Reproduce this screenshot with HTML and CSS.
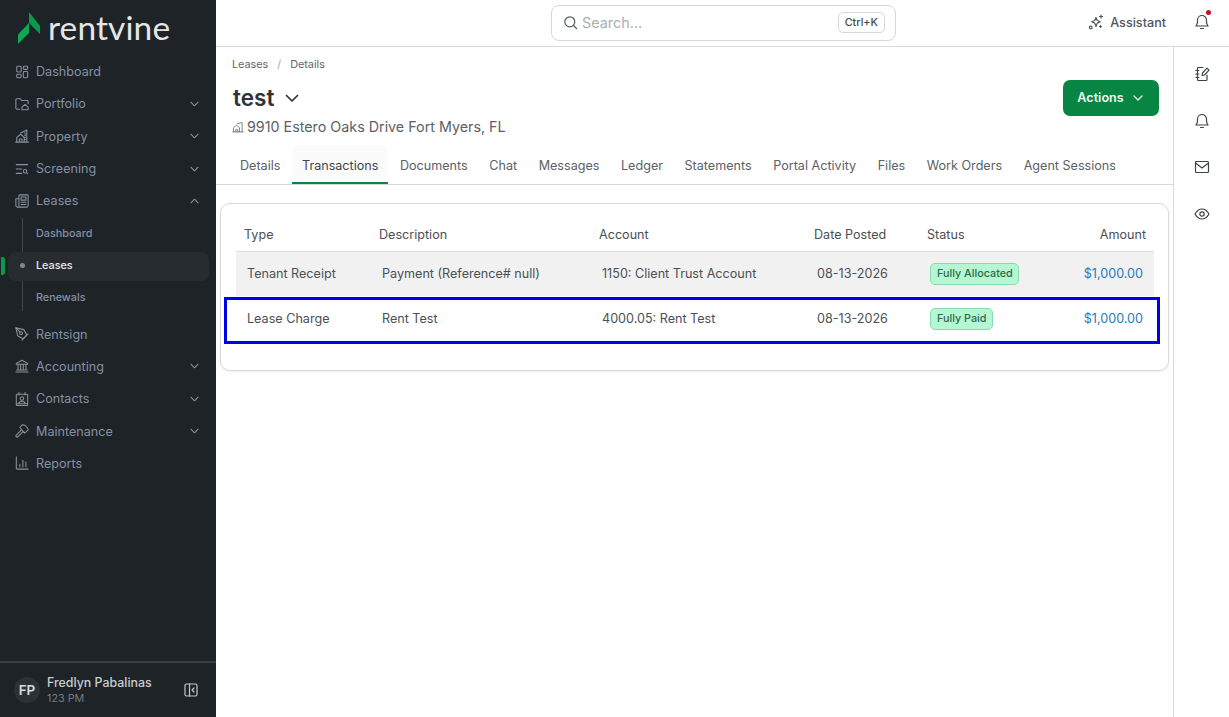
FILE: index.html
```html
<!DOCTYPE html>
<html lang="en">
<head>
    <meta charset="UTF-8">
    <meta name="viewport" content="width=device-width, initial-scale=1.0">
    <title>Lease Details - Rentvine</title>
    <link rel="stylesheet" href="styles.css">
</head>
<body>
    <div class="app">
        <aside class="sidebar">
            <div class="logo">
                <svg class="logo-mark" width="22" height="32" viewBox="0 0 22 32"><path d="M0 22.500L11 11V21L0 32Z" fill="#0fa956"/><path d="M11 0L22 14V22L11 11Z" fill="#0b9a4c"/></svg>
                <span class="logo-text">rentvine</span>
            </div>
            <nav class="nav">
                <a class="nav-item"><svg class="nav-icon" viewBox="0 0 16 16"><rect x="2" y="1.500" width="5" height="6.500" rx="1"/><rect x="9.500" y="1.500" width="5" height="3.500" rx="1"/><rect x="2" y="10.500" width="5" height="4" rx="1"/><rect x="9.500" y="7.500" width="5" height="7" rx="1"/></svg>Dashboard</a>
                <a class="nav-item"><svg class="nav-icon" viewBox="0 0 16 16"><path d="M5.500 14H2.500A1.500 1.500 0 0 1 1 12.500V3a1 1 0 0 1 1-1h4l1.500 2H14a1 1 0 0 1 1 1v2.500"/><path d="M8 11.500l3.500-3 3.500 3V14.500H8z"/></svg>Portfolio<svg class="chev" viewBox="0 0 10 6"><path d="M1 1l4 4 4-4"/></svg></a>
                <a class="nav-item"><svg class="nav-icon" viewBox="0 0 16 16"><path d="M.8 15h14.400M2 15V9.500L6.500 6l4 3.500V15M5 15v-3.500h3V15M6.500 4.500L13.500 1.200V15M11 4.500h1M11 7h1M11 9.500h1M11 12h1"/></svg>Property<svg class="chev" viewBox="0 0 10 6"><path d="M1 1l4 4 4-4"/></svg></a>
                <a class="nav-item"><svg class="nav-icon" viewBox="0 0 16 16"><path d="M1.500 3h13M1.500 8h6M1.500 13h6"/><circle cx="11.500" cy="10.500" r="2"/><path d="M13 12l1.500 1.500"/></svg>Screening<svg class="chev" viewBox="0 0 10 6"><path d="M1 1l4 4 4-4"/></svg></a>
                <a class="nav-item"><svg class="nav-icon" viewBox="0 0 16 16"><path d="M4.500 13.500V2a1 1 0 0 1 1-1H14a1 1 0 0 1 1 1V13a2 2 0 0 1-2 2H3a2 2 0 0 1-2-2V5.500H4.500"/><path d="M7 3.500h5.500V7H7zM7 9.500h5.500M7 12h5.500"/></svg>Leases<svg class="chev" viewBox="0 0 10 6"><path d="M1 5l4-4 4 4"/></svg></a>
                <div class="subnav">
                    <a class="sub-item">Dashboard</a>
                    <a class="sub-item active">Leases</a>
                    <a class="sub-item">Renewals</a>
                </div>
                <a class="nav-item"><svg class="nav-icon" viewBox="0 0 16 16"><path d="M1 1l9 2 3.500 6-4.500 4.500-6-3.500z"/><circle cx="7" cy="7" r="1.600"/><path d="M8 15l7-7M1 1l4.800 4.800"/></svg>Rentsign</a>
                <a class="nav-item"><svg class="nav-icon" viewBox="0 0 16 16"><path d="M1.500 5L8 1.500 14.500 5V6h-13zM3.500 6v6M6.500 6v6M9.500 6v6M12.500 6v6M2 12.500h12M1 14.800h14"/></svg>Accounting<svg class="chev" viewBox="0 0 10 6"><path d="M1 1l4 4 4-4"/></svg></a>
                <a class="nav-item"><svg class="nav-icon" viewBox="0 0 16 16"><rect x="1.500" y="2.500" width="13" height="13" rx="1"/><path d="M4.500 .5v3M11.500 .5v3M4.500 13.500c0-2 1.500-3 3.500-3s3.500 1 3.500 3zM1.500 13.500h13"/><circle cx="8" cy="7.500" r="2"/></svg>Contacts<svg class="chev" viewBox="0 0 10 6"><path d="M1 1l4 4 4-4"/></svg></a>
                <a class="nav-item"><svg class="nav-icon" viewBox="0 0 16 16"><path d="M7.500 6.500L.8 13.500l1.700 1.700L9.500 8.500"/><path d="M5.500 4L8.500.8c3 0 5.500 2.500 6.700 6L11 10.500z"/></svg>Maintenance<svg class="chev" viewBox="0 0 10 6"><path d="M1 1l4 4 4-4"/></svg></a>
                <a class="nav-item"><svg class="nav-icon" viewBox="0 0 16 16"><path d="M1.500 1v13a1 1 0 0 0 1 1H15M5.500 12.500V9.500M9 12.500V5M12.500 12.500V7"/></svg>Reports</a>
            </nav>
            <div class="user">
                <div class="avatar">FP</div>
                <div class="user-info">
                    <div class="user-name">Fredlyn Pabalinas</div>
                    <div class="user-org">123 PM</div>
                </div>
                <svg class="collapse" width="14" height="14" viewBox="0 0 14 14"><rect x="1" y="1" width="12" height="12" rx="1.500"/><path d="M5.500 1v12M10 5L8 7l2 2"/></svg>
            </div>
        </aside>

        <div class="content">
            <header class="topbar">
                <div class="search">
                    <svg width="15" height="15" viewBox="0 0 15 15"><circle cx="6.800" cy="6.800" r="5"/><path d="M10.500 10.500L13.500 13.500"/></svg>
                    <span class="search-text">Search...</span>
                    <span class="kbd">Ctrl+K</span>
                </div>
                <div class="top-actions">
                    <a class="assistant">
                        <svg width="16" height="16" viewBox="0 0 16 16"><path d="M8 3.500l1.300 3 3 1.300-3 1.300L8 12.500 6.700 9.100l-3-1.300 3-1.300zM13 1v3M11.500 2.500h3M12.500 11.500v2M11.500 12.500h2"/><circle cx="2.700" cy="13.500" r="1.300"/></svg>
                        Assistant
                    </a>
                    <span class="bell">
                        <svg width="16" height="18" viewBox="0 0 16 18"><path d="M2 13h12c-1-1-1.500-2-1.500-4.500V7a4.500 4.500 0 0 0-9 0v1.500C3.500 11 3 12 2 13zM6.500 15.500h3"/></svg>
                        <i class="dot"></i>
                    </span>
                </div>
            </header>

            <div class="body">
                <main class="main">
                    <div class="page-head">
                        <div class="crumbs"><span>Leases</span><span class="sep">/</span><span>Details</span></div>
                        <div class="title-row">
                            <div>
                                <h1>test <svg width="14" height="9" viewBox="0 0 14 9"><path d="M1.500 1.500L7 7l5.500-5.500"/></svg></h1>
                                <div class="address"><svg width="12" height="12" viewBox="0 0 16 16"><path d="M1 14.500h14M2 14.500V9l4-3.500L10 9v5.500M5 14.500v-3h2.500v3M7 3.500L13.500 2v12.500"/></svg>9910 Estero Oaks Drive Fort Myers, FL</div>
                            </div>
                            <button class="actions">Actions <svg width="10" height="6" viewBox="0 0 10 6"><path d="M1 1l4 4 4-4"/></svg></button>
                        </div>
                    </div>
                    <div class="tabs">
                        <a class="tab">Details</a>
                        <a class="tab active">Transactions</a>
                        <a class="tab">Documents</a>
                        <a class="tab">Chat</a>
                        <a class="tab">Messages</a>
                        <a class="tab">Ledger</a>
                        <a class="tab">Statements</a>
                        <a class="tab">Portal Activity</a>
                        <a class="tab">Files</a>
                        <a class="tab">Work Orders</a>
                        <a class="tab">Agent Sessions</a>
                    </div>
                    <div class="card">
                        <table class="table">
                            <colgroup>
                                <col class="c-type"><col class="c-desc"><col class="c-acct"><col class="c-date"><col class="c-status"><col class="c-amt">
                            </colgroup>
                            <thead>
                                <tr><th>Type</th><th>Description</th><th>Account</th><th>Date Posted</th><th>Status</th><th class="right">Amount</th></tr>
                            </thead>
                            <tbody>
                                <tr class="shaded">
                                    <td>Tenant Receipt</td><td>Payment (Reference# null)</td><td>1150: Client Trust Account</td><td>08-13-2026</td>
                                    <td><span class="badge">Fully Allocated</span></td><td class="right amount">$1,000.00</td>
                                </tr>
                                <tr>
                                    <td>Lease Charge</td><td>Rent Test</td><td>4000.05: Rent Test</td><td>08-13-2026</td>
                                    <td><span class="badge">Fully Paid</span></td><td class="right amount">$1,000.00</td>
                                </tr>
                            </tbody>
                        </table>
                        <div class="highlight"></div>
                    </div>
                </main>
                <aside class="rail">
                    <svg viewBox="0 0 16 16"><path d="M13 9v4.500a1 1 0 0 1-1 1H4.500a1 1 0 0 1-1-1v-11a1 1 0 0 1 1-1H9M1.800 4.500h3M1.800 8h3M1.800 11.500h3M8 9.500l.5-2.500L13 2.200l2 2L10.500 9z"/></svg>
                    <svg viewBox="0 0 16 16"><path d="M2 12h12c-1-1-1.500-2-1.500-4.500V6a4.500 4.500 0 0 0-9 0v1.500C3.500 10 3 11 2 12zM6.500 14.500h3"/></svg>
                    <svg viewBox="0 0 16 16"><rect x="1.500" y="2.500" width="13" height="11" rx="1"/><path d="M1.500 4l6.500 5 6.500-5"/></svg>
                    <svg viewBox="0 0 16 16"><path d="M1 8c2-3.500 4.500-5 7-5s5 1.500 7 5c-2 3.500-4.500 5-7 5s-5-1.500-7-5z"/><circle cx="8" cy="8" r="2.200"/></svg>
                </aside>
            </div>
        </div>
    </div>
</body>
</html>
```

FILE: styles.css
```css
* {
    box-sizing: border-box;
}
body {
    margin: 0;
    font-family: Inter, "Noto Sans", sans-serif;
    color: #3d4347;
    background: #fff;
    font-size: 12.6px;
}
svg {
    fill: none;
    stroke: currentColor;
    stroke-width: 1.2;
    stroke-linecap: round;
    stroke-linejoin: round;
}
.app {
    display: flex;
    height: 717px;
    overflow: hidden;
}

/* sidebar */
.sidebar {
    width: 216px;
    flex: none;
    background: #1e2328;
    color: #8a94a3;
    display: flex;
    flex-direction: column;
}
.logo {
    display: flex;
    align-items: center;
    gap: 8px;
    height: 55px;
    padding: 0 0 0 18px;
}
.logo-mark {
    stroke: none;
}
.logo-text {
    font-family: Lato, sans-serif;
    font-size: 33.5px;
    line-height: 1;
    color: #e4e6e8;
    letter-spacing: 0.1px;
}
.nav {
    flex: 1;
    padding-top: 0.5px;
}
.nav-item {
    display: flex;
    align-items: center;
    height: 32.3px;
    padding: 0 17px 0 15px;
    color: #8491a5;
}
.nav-icon {
    width: 14px;
    height: 14px;
    margin-right: 7px;
    color: #8a929c;
    flex: none;
}
.chev {
    width: 9px;
    height: 6px;
    margin-left: auto;
    color: #8a929c;
}
.subnav {
    position: relative;
    margin: 1px 0 7px 22px;
    border-left: 1px solid #3f454b;
    height: 93px;
}
.sub-item {
    display: flex;
    align-items: center;
    height: 32px;
    padding-left: 13px;
    font-size: 10.8px;
    font-weight: 500;
    color: #8491a5;
}
.sub-item.active {
    position: relative;
    margin: 2px 7px 1px -15px;
    padding: 0 0 1px 28px;
    height: 29px;
    border-radius: 8px;
    background: #272c30;
    color: #e8eaec;
}
.sub-item.active::before {
    content: "";
    position: absolute;
    left: 12px;
    top: 11px;
    width: 5px;
    height: 5px;
    border-radius: 50%;
    background: #7f8893;
}
.sub-item.active::after {
    content: "";
    position: absolute;
    left: -7px;
    top: 5px;
    width: 4px;
    height: 18px;
    border-radius: 0 3px 3px 0;
    background: #0a9a4a;
}
.user {
    display: flex;
    align-items: center;
    height: 56px;
    border-top: 2px solid #3a3f43;
    padding: 0 18px 0 14px;
}
.avatar {
    width: 26px;
    height: 26px;
    border-radius: 50%;
    background: #2a3236;
    color: #d8dadc;
    font-size: 13.500px;
    font-weight: 600;
    display: flex;
    align-items: center;
    justify-content: center;
    margin-right: 7px;
}
.user-info {
    padding-bottom: 1px;
}
.user-name {
    font-size: 12.4px;
    font-weight: 500;
    color: #c9ccd0;
}
.user-org {
    font-size: 10.8px;
    color: #727a84;
    margin-top: 2px;
}
.collapse {
    margin-left: auto;
    color: #c4c7ca;
}

/* top bar */
.content {
    flex: 1;
    min-width: 0;
    display: flex;
    flex-direction: column;
}
.topbar {
    height: 47px;
    border-bottom: 1px solid #d9d9d9;
    display: flex;
    align-items: center;
    position: relative;
    flex: none;
    padding-bottom: 2px;
}
.search {
    position: absolute;
    left: 335px;
    top: 5px;
    width: 345px;
    height: 36px;
    border: 1px solid #d5d7d9;
    border-radius: 8px;
    display: flex;
    align-items: center;
    padding: 0 10px 2px 11px;
    color: #555b60;
}
.search-text {
    margin-left: 4px;
    font-size: 14.4px;
    color: #a9afb3;
}
.kbd {
    margin-left: auto;
    border: 1px solid #d5d7d9;
    border-radius: 5px;
    padding: 3px 6px;
    font-size: 10.8px;
    font-weight: 500;
    color: #444a4f;
}
.top-actions {
    margin-left: auto;
    display: flex;
    align-items: center;
    padding-right: 19px;
}
.assistant {
    display: flex;
    align-items: center;
    gap: 6px;
    font-weight: 500;
    color: #50565b;
    margin-right: 28px;
}
.bell {
    position: relative;
    display: flex;
    color: #3d4347;
}
.dot {
    position: absolute;
    right: -1px;
    top: -3px;
    width: 5px;
    height: 5px;
    border-radius: 50%;
    background: #c8101e;
}

/* page */
.body {
    flex: 1;
    display: flex;
    min-height: 0;
}
.main {
    flex: 1;
    min-width: 0;
}
.rail {
    width: 56px;
    flex: none;
    border-left: 1px solid #d9d9d9;
    display: flex;
    flex-direction: column;
    align-items: center;
    gap: 30.7px;
    padding: 19px 0 0 1px;
    color: #3d4347;
}
.rail svg {
    width: 16px;
    height: 16px;
}
.page-head {
    padding: 11px 14px 0 16px;
}
.crumbs {
    display: flex;
    gap: 9px;
    font-size: 10.8px;
    color: #5f666b;
    line-height: 13px;
}
.sep {
    color: #a5a9ac;
}
.title-row {
    display: flex;
    justify-content: space-between;
    align-items: flex-start;
    margin-top: 9px;
}
h1 {
    margin: 0;
    padding: 3px 0 0 1px;
    font-size: 22.5px;
    font-weight: 600;
    line-height: 30px;
    color: #2d3338;
    display: flex;
    align-items: center;
    gap: 6px;
}
h1 svg {
    margin-left: 5px;
    stroke-width: 1.700;
}
.address {
    margin-top: 5px;
    display: flex;
    align-items: center;
    gap: 3px;
    font-size: 14.3px;
    line-height: 17px;
    color: #5b6166;
}
.address svg {
    color: #70767b;
}
.actions {
    width: 96px;
    height: 36px;
    border: none;
    border-radius: 7px;
    padding: 0 2px 1px 0;
    background: #088542;
    color: #f2f8f4;
    font-family: inherit;
    font-size: 12.6px;
    font-weight: 600;
    display: flex;
    align-items: center;
    justify-content: center;
    gap: 9px;
}
.tabs {
    display: flex;
    height: 40px;
    margin-top: 10px;
    padding-left: 14px;
    border-bottom: 1px solid #d9d9d9;
}
.tab {
    padding: 2px 10px 0;
    margin-right: 1.55px;
    display: flex;
    align-items: center;
    color: #5b6166;
    height: 39px;
}
.tab.active {
    padding-top: 4px;
    color: #40464b;
    background: #fbfbfb;
    border-radius: 6px 6px 0 0;
    border-bottom: 2px solid #088542;
}
.card {
    position: relative;
    margin: 18px 4px 0;
    height: 168px;
    border: 1px solid #d9d9d9;
    border-radius: 10px;
    padding: 14px 15px 0;
    box-shadow: 0 1px 2px rgba(0, 0, 0, 0.08);
}
.table {
    width: 918px;
    border-collapse: collapse;
    table-layout: fixed;
    font-size: 12.6px;
}
.c-type { width: 135px; }
.c-desc { width: 220px; }
.c-acct { width: 215px; }
.c-date { width: 113px; }
.c-status { width: 135px; }
.table th {
    height: 33px;
    text-align: left;
    padding: 1px 8px 0;
    font-weight: 400;
    color: #4a5055;
    border-bottom: 1px solid #dedede;
}
.table td {
    height: 45px;
    padding: 0 11px 1px;
    color: #4a5055;
}
.table .right {
    text-align: right;
}
.shaded td {
    background: #f1f1f1;
}
.table .amount {
    color: #2878c0;
}
.badge {
    display: inline-block;
    vertical-align: -4px;
    font-size: 10.8px;
    font-weight: 500;
    line-height: 20px;
    padding: 0 5.5px 0 6px;
    color: #2b6b4c;
    background: #b5f7d2;
    border: 1px solid #86dcae;
    border-radius: 5px;
}
.highlight {
    position: absolute;
    left: 3px;
    top: 93px;
    width: 936px;
    height: 47px;
    border: 3px solid #0000e6;
    pointer-events: none;
}
```
